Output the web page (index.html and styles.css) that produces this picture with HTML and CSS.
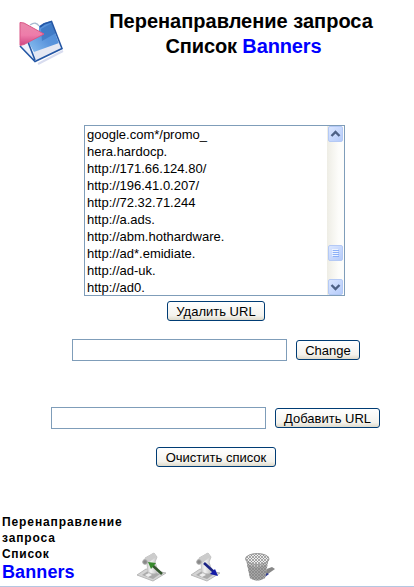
FILE: index.html
```html
<!DOCTYPE html>
<html lang="ru">
<head>
<meta charset="utf-8">
<title>Banners</title>
<link rel="stylesheet" href="styles.css">
</head>
<body>
<header class="header">
  <svg class="logo" width="52" height="52" viewBox="0 0 52 52">
    <defs>
      <linearGradient id="blue" x1="0" y1="1" x2="1" y2="0"><stop offset="0" stop-color="#8fc3f3"/><stop offset=".5" stop-color="#5b95dc"/><stop offset="1" stop-color="#4d8cd8"/></linearGradient>
      <linearGradient id="pink" x1="0" y1="0" x2="0" y2="1"><stop offset="0" stop-color="#e98aac"/><stop offset=".55" stop-color="#ee7caa"/><stop offset="1" stop-color="#cf4482"/></linearGradient>
    </defs>
    <path d="M23 49L48 36" stroke="#d8dcef" stroke-width="2"/>
    <path d="M6 32L27 11L37 6L47 34L21 46z" fill="#edf2fc"/>
    <path d="M13 26L24 18V11L29 8L36 6L44 29L20 39z" fill="url(#blue)"/>
    <path d="M26 14l11-6 4 10-14 8z" fill="#2861b0" opacity=".45"/>
    <path d="M19 37L44 28L47 34L21 46z" fill="#e5e8f3"/>
    <path d="M5 31L20 46.5L47 33.5L36.500 6.500L29 9L25 12M13 27L20 45" fill="none" stroke="#2457a5" stroke-width="1.600"/>
    <path d="M15 10q6-4 9 1" fill="none" stroke="#a7b9d0" stroke-width="1.3"/>
    <path d="M5 7.500L9 8L29 19L9 29.500L5 30.500z" fill="url(#pink)" stroke="#d95787" stroke-linejoin="round"/>
  </svg>
  <h1 class="title">Перенаправление запроса<br><span class="subtitle">Список <span class="accent">Banners</span></span></h1>
</header>
<main class="panel">
  <div class="listbox">
    <ul class="items">
      <li>google.com*/promo_</li><li>hera.hardocp.</li><li>http://171.66.124.80/</li><li>http://196.41.0.207/</li><li>http://72.32.71.244</li><li>http://a.ads.</li><li>http://abm.hothardware.</li><li>http://ad*.emidiate.</li><li>http://ad-uk.</li><li>http://ad0.</li>
    </ul>
    <div class="scroll">
      <svg class="key" viewBox="0 0 13 14"><path d="M2.500 9L6.500 5L10.500 9" fill="none" stroke="#4d6185" stroke-width="2.400"/></svg>
      <span class="track"></span>
      <svg class="key" viewBox="0 0 13 14"><path d="M3 3.500h6M3 5.500h6M3 7.500h6M3 9.500h6" stroke="#eef4fe"/><path d="M4 4.500h6M4 6.500h6M4 8.500h6M4 10.500h6" stroke="#8cb0f8"/></svg>
      <span class="gap"></span>
      <svg class="key" viewBox="0 0 13 14"><path d="M2.500 5L6.500 9L10.500 5" fill="none" stroke="#4d6185" stroke-width="2.400"/></svg>
    </div>
  </div>
  <button class="btn remove">Удалить URL</button>
  <div class="row change"><input class="field" type="text"><button class="btn">Change</button></div>
  <div class="row add"><input class="field" type="text"><button class="btn">Добавить URL</button></div>
  <button class="btn clear">Очистить список</button>
</main>
<footer class="footer">
  <div class="caption">Перенаправление<br><span class="mid">запроса</span><br><span class="tight">Список</span><br><span class="accent name">Banners</span></div>
  <svg class="tool" width="32" height="32" viewBox="0 0 32 32">
    <defs><linearGradient id="gray"><stop offset="0" stop-color="#bbb"/><stop offset=".45" stop-color="#f3f3f3"/><stop offset="1" stop-color="#bcbcbc"/></linearGradient></defs>
    <path d="M1 24L10 18L30 22L17 30z" fill="#d4d4d4" stroke="#b8b8b8"/>
    <path d="M6 24l6-4 12 3-7 5z" fill="#aaa"/><path d="M9 24l4-2 3 2-4 2z" fill="#eee"/>
    <path d="M9 7L18 2L21 6L19 11L22 20Q18 25 12 21L11 13z" fill="url(#gray)" stroke="#c5c5c5"/>
    <path d="M7 9L17 2L20 6L11 13z" fill="#ccc"/><circle cx="9" cy="11" r="2.300" fill="#888" stroke="#aaa"/>
    <path d="M26 23L16 14" stroke="#35572f" stroke-width="2.600"/><path d="M12 11l8 1-5 6z" fill="#388b2d"/>
  </svg>
  <svg class="tool next" width="32" height="32" viewBox="0 0 32 32">
    <path d="M1 24L10 18L30 22L17 30z" fill="#d4d4d4" stroke="#b8b8b8"/>
    <path d="M6 24l6-4 12 3-7 5z" fill="#aaa"/><path d="M9 24l4-2 3 2-4 2z" fill="#eee"/>
    <path d="M9 7L18 2L21 6L19 11L22 20Q18 25 12 21L11 13z" fill="url(#gray)" stroke="#c5c5c5"/>
    <path d="M7 9L17 2L20 6L11 13z" fill="#ccc"/><circle cx="9" cy="11" r="2.300" fill="#888" stroke="#aaa"/>
    <path d="M14 12L24 21" stroke="#1b2384" stroke-width="2.600"/><path d="M28 25l-8-2 5-5z" fill="#141ba8"/>
  </svg>
  <svg class="tool next" width="32" height="32" viewBox="0 0 32 32">
    <defs><pattern id="mesh" width="3" height="3" patternUnits="userSpaceOnUse"><path d="M0 0l3 3M3 0L0 3" stroke="#808080" stroke-width=".65"/></pattern></defs>
    <path d="M20 19l8-3 3 2-10 7z" fill="#888"/><path d="M20 25l3-3 2 1-4 3z" fill="#2d3b93"/>
    <path d="M1.500 6Q13 0 25 6L21 27Q13 32 6 27z" fill="#c9c9c9"/>
    <path d="M3 13q10 6 20 0l-2 14q-8 5-15 0z" fill="#a5a5a5"/>
    <path d="M1.500 6Q13 0 25 6L21 27Q13 32 6 27z" fill="url(#mesh)"/>
    <ellipse cx="13.300" cy="8" rx="11.700" ry="5.500" fill="#ededed"/><ellipse cx="13.300" cy="8" rx="11.700" ry="5.500" fill="url(#mesh)" stroke="#999"/>
  </svg>
</footer>
</body>
</html>
```
FILE: styles.css
```css
* { box-sizing: border-box; }
body { margin: 0; height: 587px; overflow: hidden; background: #fff; color: #000; font-family: "Liberation Sans", Arial, sans-serif; display: flex; flex-direction: column; }
.header { height: 125px; display: flex; padding: 9px 0 0 15px; }
.logo { margin-top: 6px; flex: none; }
.title { margin: 0 0 0 42px; width: 264px; text-align: center; white-space: nowrap; font-size: 20px; line-height: 25px; font-weight: bold; }
.subtitle { padding-left: 5px; letter-spacing: -.12px; }
.accent { color: #00f; }
.panel { display: flex; flex-direction: column; align-items: flex-start; height: 389px; }
.listbox { display: flex; width: 261px; height: 171px; margin-left: 84px; border: 1px solid #7f9db9; flex: none; }
.items { list-style: none; margin: 0; padding: 0 0 0 2px; flex: 1; font-size: 13px; line-height: 17px; overflow: hidden; }
.scroll { width: 17px; display: flex; flex-direction: column; align-items: center; background: linear-gradient(90deg, #eeede5, #fdfdfb 70%); }
.key { width: 15px; height: 16px; flex: none; border: 1px solid #b4c9f5; border-radius: 2px; background: linear-gradient(135deg, #dae6ff, #b5cbfa); }
.track { height: 103px; }
.gap { flex: 1; }
.btn { height: 20px; flex: none; padding: 1px 0 0; border: 1px solid #003c74; border-radius: 3px; background: linear-gradient(#fff, #f4f3ee 75%, #dedacb); font: 13px/17px "Liberation Sans", Arial, sans-serif; color: #000; white-space: nowrap; }
.remove { width: 98px; margin: 5px 0 0 167px; }
.row { display: flex; align-items: center; gap: 9px; flex: none; }
.field { width: 215px; height: 22px; border: 1px solid #7f9db9; padding: 0 3px; background: #fff; }
.change { margin: 18px 0 0 72px; }
.change .btn { width: 64px; }
.add { margin: 46px 0 0 51px; }
.add .btn { width: 105px; }
.clear { width: 120px; margin: 18px 0 0 156px; }
.footer { height: 73px; display: flex; border-bottom: 1px solid #b5c7e1; flex: none; }
.caption { width: 136px; padding-left: 2px; font-size: 12px; line-height: 16px; font-weight: bold; letter-spacing: .9px; white-space: nowrap; }
.mid { letter-spacing: .85px; }
.tight { letter-spacing: .7px; }
.name { font-size: 18px; line-height: 20px; letter-spacing: .1px; }
.tool { margin-top: 37px; flex: none; }
.next { margin-left: 22px; }
```
